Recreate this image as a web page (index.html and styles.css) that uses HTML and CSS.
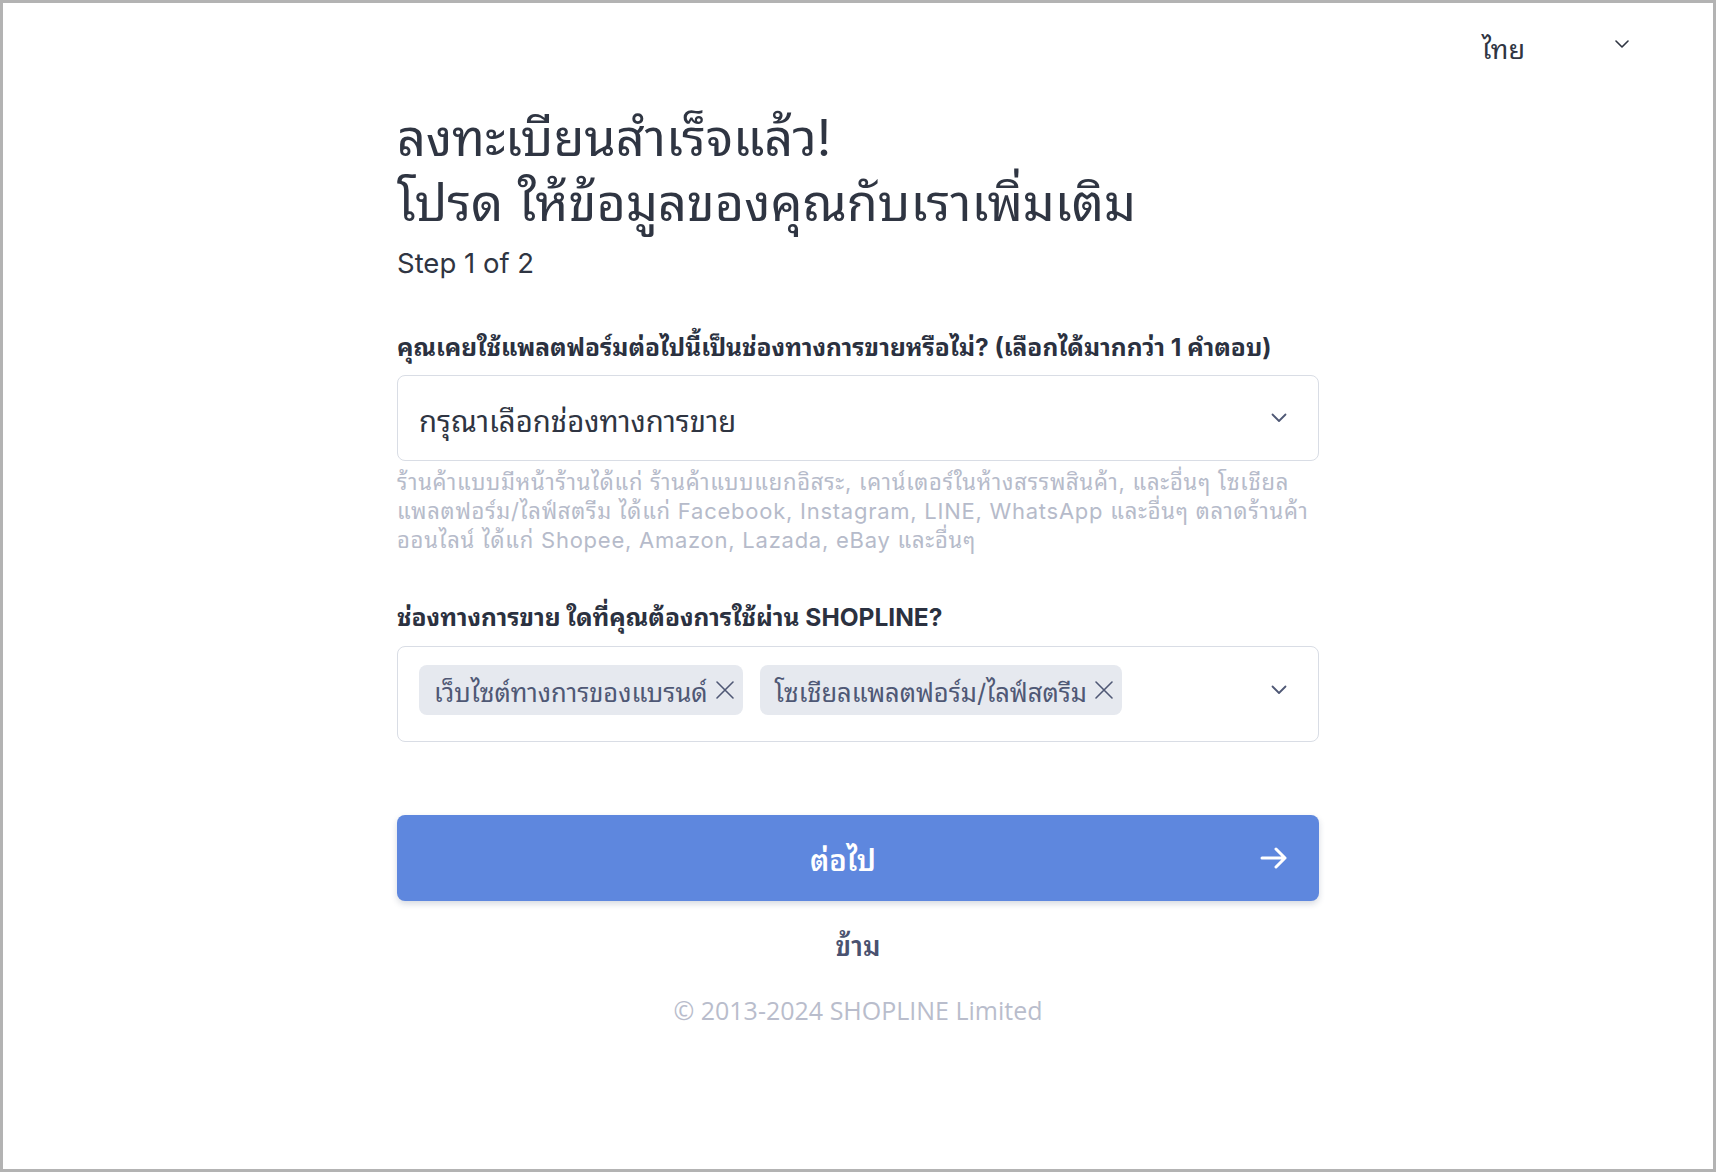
FILE: index.html
```html
<!DOCTYPE html>
<html lang="th">
<head>
<meta charset="utf-8">
<title>SHOPLINE</title>
<link rel="stylesheet" href="styles.css">
</head>
<body>
<div class="frame">
  <header class="topbar">
    <div class="lang">
      <span class="lang-label">ไทย</span>
      <svg class="lang-chev" width="14" height="8" viewBox="0 0 14 8"><path d="M1 1l6 6 6-6" fill="none" stroke="#2f3542" stroke-width="1.6" stroke-linecap="round" stroke-linejoin="round"/></svg>
    </div>
  </header>
  <main class="content">
    <h1 class="title">ลงทะเบียนสำเร็จแล้ว!<br>โปรด ให้ข้อมูลของคุณกับเราเพิ่มเติม</h1>
    <p class="step">Step 1 of 2</p>

    <section class="field first">
      <label class="label">คุณเคยใช้แพลตฟอร์มต่อไปนี้เป็นช่องทางการขายหรือไม่? (เลือกได้มากกว่า 1 คำตอบ)</label>
      <div class="select">
        <span class="placeholder">กรุณาเลือกช่องทางการขาย</span>
        <svg class="chev" width="16" height="10" viewBox="0 0 16 10"><path d="M1.5 1.5l6.5 6.5 6.5-6.5" fill="none" stroke="#4f5875" stroke-width="1.8" stroke-linecap="round" stroke-linejoin="round"/></svg>
      </div>
      <p class="help">ร้านค้าแบบมีหน้าร้านได้แก่ ร้านค้าแบบแยกอิสระ, เคาน์เตอร์ในห้างสรรพสินค้า, และอื่นๆ โซเชียลแพลตฟอร์ม/ไลฟ์สตรีม ได้แก่ Facebook, Instagram, LINE, WhatsApp และอื่นๆ ตลาดร้านค้าออนไลน์ ได้แก่ Shopee, Amazon, Lazada, eBay และอื่นๆ</p>
    </section>

    <section class="field second">
      <label class="label">ช่องทางการขาย ใดที่คุณต้องการใช้ผ่าน SHOPLINE?</label>
      <div class="select multi">
        <div class="chips">
          <span class="chip">เว็บไซต์ทางการของแบรนด์<svg class="x" width="20" height="20" viewBox="0 0 20 20"><path d="M2 2l16 16M18 2L2 18" stroke="#4f5875" stroke-width="1.6" stroke-linecap="round"/></svg></span>
          <span class="chip">โซเชียลแพลตฟอร์ม/ไลฟ์สตรีม<svg class="x" width="20" height="20" viewBox="0 0 20 20"><path d="M2 2l16 16M18 2L2 18" stroke="#4f5875" stroke-width="1.6" stroke-linecap="round"/></svg></span>
        </div>
        <svg class="chev" width="16" height="10" viewBox="0 0 16 10"><path d="M1.5 1.5l6.5 6.5 6.5-6.5" fill="none" stroke="#4f5875" stroke-width="1.8" stroke-linecap="round" stroke-linejoin="round"/></svg>
      </div>
    </section>

    <button class="next" type="button">
      <span class="next-label">ต่อไป</span>
      <svg class="arrow" width="28" height="22" viewBox="0 0 28 22"><path d="M2 11h23M16 2l9 9-9 9" fill="none" stroke="#fff" stroke-width="3" stroke-linecap="round" stroke-linejoin="round"/></svg>
    </button>
    <a class="skip" href="#">ข้าม</a>
    <p class="copy">© 2013-2024 SHOPLINE Limited</p>
  </main>
</div>
</body>
</html>
```

FILE: styles.css
```css
* { box-sizing: border-box; }
html, body { margin: 0; padding: 0; }
body {
  font-family: Inter, "Noto Sans Thai Looped", "Loma", "Garuda", "Noto Sans Thai", "Noto Sans", sans-serif;
  color: #2f3542;
  background: #fff;
}
.frame {
  height: 1172px;
  border: 3px solid #b3b3b3;
  background: #fff;
  display: flex;
  flex-direction: column;
}
.topbar {
  display: flex;
  justify-content: flex-end;
  padding: 29px 84px 0 0;
  height: 102px;
}
.lang {
  display: flex;
  align-items: flex-start;
  gap: 90px;
  height: 36px;
}
.lang-label { font-size: 27px; line-height: 36px; color: #2f3542; }
.lang-chev { margin-top: 8px; }
.content {
  width: 922px;
  margin: 0 auto;
  display: flex;
  flex-direction: column;
}
.title {
  margin: 0;
  font-size: 50.4px;
  line-height: 65px;
  font-weight: 400;
  color: #2f3542;
}
.step {
  margin: 10px 0 0;
  font-size: 27.5px;
  line-height: 36px;
  color: #2f3542;
}
.field { display: flex; flex-direction: column; }
.field.first { margin-top: 50px; }
.field.second { margin-top: 46px; }
.label {
  font-size: 24.5px;
  line-height: 32px;
  font-weight: 700;
  color: #2b3140;
}
.select {
  margin-top: 12px;
  height: 86px;
  border: 1px solid #d9dde5;
  border-radius: 8px;
  display: flex;
  align-items: center;
  justify-content: space-between;
  padding: 0 31px 0 21px;
}
.select.multi {
  height: 96px;
  margin-top: 13px;
  align-items: flex-start;
  padding-top: 18px;
}
.select.multi .chev { margin-top: 20px; }
.placeholder { font-size: 29.3px; color: #2f3542; }
.help {
  margin: 7px 0 0;
  font-size: 22px;
  line-height: 29px;
  letter-spacing: 0.75px;
  color: #b6bbca;
}
.chips { display: flex; gap: 17px; }
.chip {
  display: inline-flex;
  align-items: center;
  gap: 7px;
  height: 50px;
  padding: 0 8px 0 15px;
  background: #e6e9ef;
  border-radius: 8px;
  font-size: 25.5px;
  color: #4f5875;
}
.next {
  margin-top: 73px;
  height: 86px;
  border: 0;
  border-radius: 8px;
  background: #5e87de;
  box-shadow: 0 3px 6px rgba(30, 50, 90, 0.18);
  display: flex;
  align-items: center;
  justify-content: center;
  position: relative;
  font-family: inherit;
  cursor: pointer;
}
.next-label { font-size: 29px; color: #fff; font-weight: 600; padding-right: 30px; }
.arrow { position: absolute; right: 31px; top: 32px; }
.skip {
  margin-top: 28px;
  align-self: center;
  font-size: 27px;
  line-height: 36px;
  color: #4a5270;
  text-decoration: none;
  font-weight: 600;
}
.copy {
  margin: 27px 0 0;
  text-align: center;
  font-family: "Open Sans", sans-serif;
  font-size: 25px;
  line-height: 36px;
  color: #b9bdcc;
}
```
